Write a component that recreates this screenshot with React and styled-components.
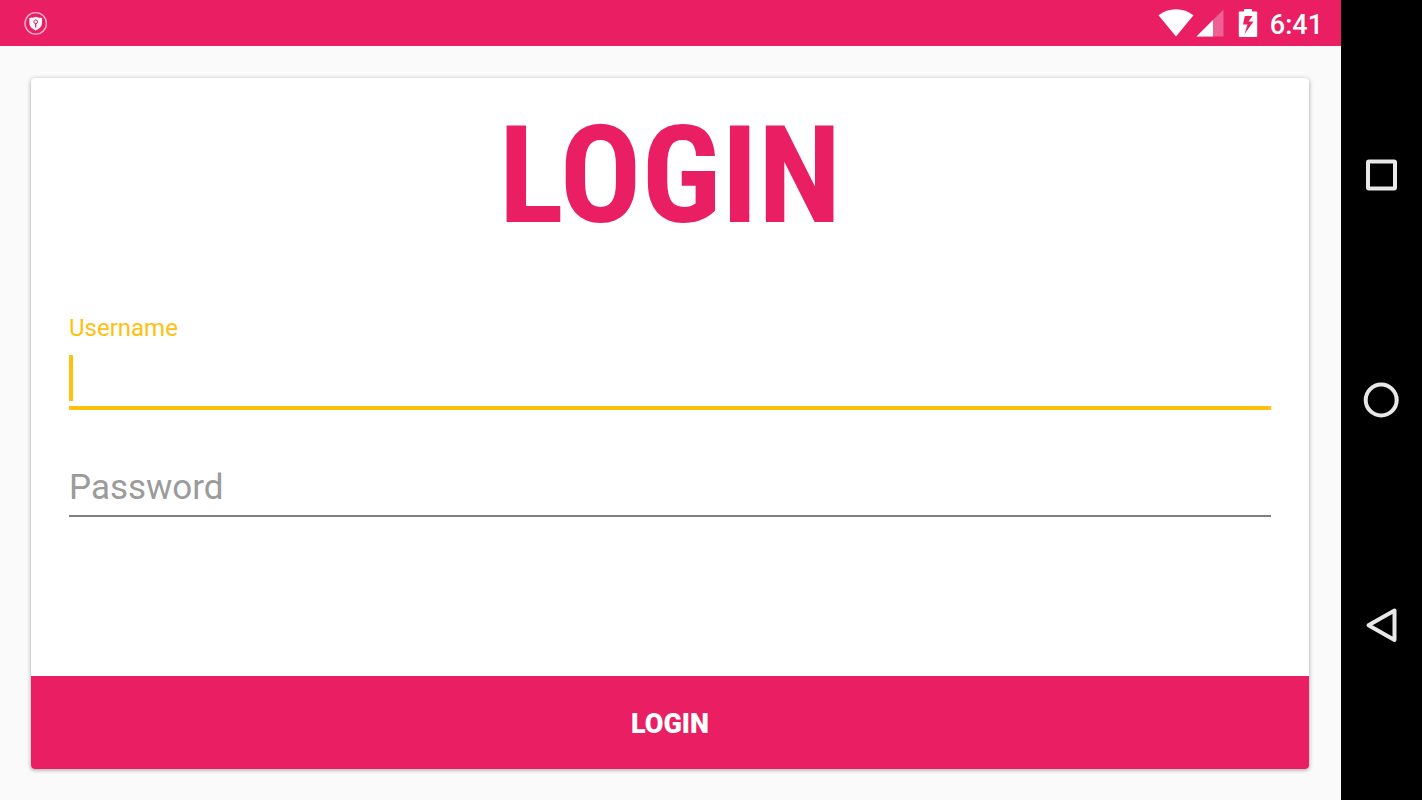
import React, { useState } from "react";
import styled, { createGlobalStyle } from "styled-components";

const pink = "#e91e63";
const amber = "#ffc010";

const GlobalStyle = createGlobalStyle`
  * {
    box-sizing: border-box;
  }
  body {
    margin: 0;
    background: #fafafa;
    font-family: Roboto, "Liberation Sans", sans-serif;
  }
`;

const App = () => {
  const [user, setUser] = useState({ username: "", password: "" });

  const handleChange = (e) => {
    const name = e.target.name;
    const value = e.target.value;
    setUser({ ...user, [name]: value });
  };
  const handleSubmit = (e) => {
    e.preventDefault();
  };

  return (
    <Screen>
      <GlobalStyle />
      <Content>
        <StatusBar>
          <ShieldIcon />
          <StatusIcons>
            <WifiIcon />
            <SignalIcon />
            <BatteryIcon />
            <Clock>6:41</Clock>
          </StatusIcons>
        </StatusBar>
        <Main>
          <Card onSubmit={handleSubmit}>
            <Title>LOGIN</Title>
            <Fields>
              <Field>
                <Label htmlFor="username">Username</Label>
                <InputWrap>
                  <Input
                    $active
                    id="username"
                    name="username"
                    type="text"
                    autoComplete="off"
                    value={user.username}
                    onChange={handleChange}
                  />
                  {!user.username && <Caret />}
                </InputWrap>
              </Field>
              <Field>
                <Input
                  id="password"
                  name="password"
                  type="password"
                  placeholder="Password"
                  aria-label="Password"
                  value={user.password}
                  onChange={handleChange}
                />
              </Field>
            </Fields>
            <SubmitButton type="submit">LOGIN</SubmitButton>
          </Card>
        </Main>
      </Content>
      <NavBar>
        <NavButton type="button" aria-label="Recent apps">
          <svg width="37" height="36" viewBox="0 0 37 36">
            <rect x="5" y="4.500" width="27" height="27" rx="1" />
          </svg>
        </NavButton>
        <NavButton type="button" aria-label="Home">
          <svg width="37" height="36" viewBox="0 0 37 36">
            <circle cx="18.200" cy="18" r="15.500" />
          </svg>
        </NavButton>
        <NavButton type="button" aria-label="Back">
          <svg width="37" height="36" viewBox="0 0 37 36">
            <path d="M31.500 3.500v29.500L5.500 18.300z" />
          </svg>
        </NavButton>
      </NavBar>
    </Screen>
  );
};

/*Status bar icons*/
const ShieldIcon = () => (
  <svg width="24" height="24" viewBox="0 0 24 24">
    <circle cx="11.700" cy="12.400" r="10.700" fill="none" stroke="#f9b4cb" strokeWidth="1.300" />
    <path d="M11.700 5.800c2 .9 4.100 1.100 6.300 1.100v5.200c0 3.400-2.600 5.800-6.300 7.400-3.700-1.600-6.300-4-6.300-7.400V6.900c2.200 0 4.300-.2 6.300-1.100z" fill="#fff" />
    <circle cx="11.700" cy="10.800" r="1.900" fill="none" stroke={pink} strokeWidth="1" />
    <path d="M11.700 12.600v4" stroke={pink} strokeWidth="1.300" />
  </svg>
);

const WifiIcon = () => (
  <svg width="36" height="30" viewBox="0 0 36 30">
    <path d="M18 28.500 .5 7.200C5.500 3.200 11.500 1.200 18 1.200s12.500 2 17.500 6z" fill="#fff" />
  </svg>
);

const SignalIcon = () => (
  <svg width="28" height="30" viewBox="0 0 28 30">
    <path d="M27.500 1.500v27H.5z" fill="#fff" fillOpacity=".3" />
    <path d="M17 12v16.500H.5z" fill="#fff" />
  </svg>
);

const BatteryIcon = () => (
  <svg width="20" height="30" viewBox="0 0 20 30">
    <path
      fillRule="evenodd"
      d="M6 1h8v2.500h4.200c.6 0 1 .4 1 1v23.500c0 .6-.4 1-1 1H1.800c-.6 0-1-.4-1-1V4.500c0-.6.4-1 1-1H6zM6.800 8 5 16.500h4.500L6.500 26 15.500 13.500h-5L14.500 8z"
      fill="#fff"
    />
  </svg>
);

const Screen = styled.div`
  display: flex;
  min-height: 100vh;
`;

const Content = styled.div`
  flex: 1;
  display: flex;
  flex-direction: column;
`;

const StatusBar = styled.header`
  display: flex;
  align-items: center;
  justify-content: space-between;
  height: 46px;
  padding: 0 18px 0 24px;
  background: ${pink};
`;

const StatusIcons = styled.div`
  display: flex;
  align-items: center;
  svg:nth-child(2) {
    margin-left: 2px;
  }
  svg:nth-child(3) {
    margin: 0 12px 0 14px;
  }
`;

const Clock = styled.time`
  padding-top: 4px;
  color: #fff;
  font-size: 27px;
  font-weight: 500;
  line-height: 32px;
`;

const Main = styled.main`
  flex: 1;
  display: flex;
  padding: 32px 32px 31px 31px;
`;

const Card = styled.form`
  flex: 1;
  display: flex;
  flex-direction: column;
  overflow: hidden;
  border-radius: 4px;
  background: #fff;
  box-shadow: 0 1px 4px rgba(0, 0, 0, 0.36);
`;

const Title = styled.h1`
  margin: 18px 0 58px;
  color: ${pink};
  font-family: "Roboto Condensed", "Liberation Sans Narrow", Roboto, sans-serif;
  font-size: 136px;
  font-weight: 700;
  line-height: 160px;
  text-align: center;
`;

const Fields = styled.div`
  flex: 1;
  display: flex;
  flex-direction: column;
  gap: 39px;
  padding: 0 38px;
`;

const Field = styled.div`
  display: flex;
  flex-direction: column;
`;

const Label = styled.label`
  color: ${amber};
  font-size: 24px;
  line-height: 28px;
`;

const InputWrap = styled.div`
  position: relative;
  display: flex;
`;

const Input = styled.input`
  width: 100%;
  height: 68px;
  padding: 10px 0 0;
  border: 0;
  border-bottom: ${(p) => (p.$active ? `4px solid ${amber}` : "2px solid #808080")};
  border-radius: 0;
  outline: none;
  background: transparent;
  caret-color: ${amber};
  color: #212121;
  font-family: inherit;
  font-size: 35px;
  &::placeholder {
    color: #9b9b9b;
    opacity: 1;
  }
`;

const Caret = styled.span`
  position: absolute;
  top: 13px;
  left: 0;
  width: 4px;
  height: 46px;
  background: ${amber};
  pointer-events: none;
`;

const SubmitButton = styled.button`
  height: 93px;
  padding: 2px 0 0;
  border: 0;
  background: ${pink};
  color: #fff;
  font-family: inherit;
  font-size: 27px;
  font-weight: 900;
  cursor: pointer;
`;

const NavBar = styled.nav`
  display: flex;
  flex-direction: column;
  width: 81px;
  padding: 62px 0;
  background: #000;
`;

const NavButton = styled.button`
  flex: 1;
  display: flex;
  align-items: center;
  justify-content: center;
  padding: 0;
  border: 0;
  background: transparent;
  cursor: pointer;
  svg {
    fill: none;
    stroke: #e8e8e8;
    stroke-width: 4;
    stroke-linejoin: round;
  }
`;

export default App;
